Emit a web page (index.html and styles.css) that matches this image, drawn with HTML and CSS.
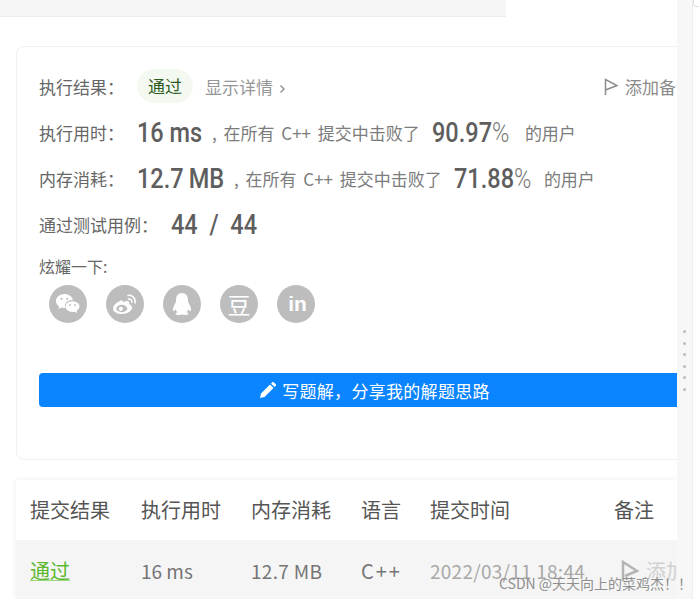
FILE: index.html
```html
<!DOCTYPE html>
<html lang="zh-CN">
<head>
    <meta charset="UTF-8">
    <title>提交记录</title>
    <link rel="stylesheet" href="styles.css">
</head>
<body>

    <div class="page">
        <div class="main">
            <div class="top-bar"></div>

            <!-- Result card -->
            <div class="card">
                <div class="row row-first">
                    <span class="label">执行结果：</span>
                    <span class="badge">通过</span>
                    <span class="details">显示详情
                        <svg class="chevron" width="7" height="10" viewBox="0 0 7 10"><path d="M1.500 1.500 5 5 1.500 8.500" fill="none" stroke="#8a8a8a" stroke-width="1.300"/></svg>
                    </span>
                    <span class="add-note">
                        <svg width="14" height="18" viewBox="0 0 14 18"><path d="M1.500 17V1.500L13 7.500 1.500 12" fill="none" stroke="#8c8c8c" stroke-width="1.500"/></svg>
                        添加备注
                    </span>
                </div>
                <div class="row">
                    <span class="label">执行用时：</span>
                    <span class="big time-val">16 ms</span>
                    <span class="text gap-comma">, 在所有 C++ 提交中击败了</span>
                    <span class="big time-pct">90.97<i>%</i></span>
                    <span class="text gap-users">的用户</span>
                </div>
                <div class="row">
                    <span class="label">内存消耗：</span>
                    <span class="big mem-val">12.7 MB</span>
                    <span class="text gap-comma">, 在所有 C++ 提交中击败了</span>
                    <span class="big mem-pct">71.88<i>%</i></span>
                    <span class="text gap-users">的用户</span>
                </div>
                <div class="row">
                    <span class="label label-wide">通过测试用例：</span>
                    <span class="big">44 &nbsp;/&nbsp; 44</span>
                </div>

                <div class="share-title">炫耀一下:</div>
                <div class="share-list">
                    <span class="share">
                        <svg width="26" height="22" viewBox="0 0 26 22" fill="#fff">
                            <path d="M9.500 1C4.800 1 1 4.100 1 8c0 2.200 1.200 4.100 3.100 5.400L3.300 16l3-1.500c1 .3 2 .5 3.200.5h.7a6 6 0 0 1-.3-1.900C9.900 9.500 13.300 7 17.400 7h.6C17.200 3.600 13.700 1 9.500 1z"/>
                            <path d="M17.500 8.200c-3.900 0-7 2.400-7 5.400s3.100 5.400 7 5.400c.8 0 1.600-.1 2.300-.3l2.500 1.300-.7-2.200c1.800-1.100 2.900-2.600 2.900-4.200 0-3-3.100-5.400-7-5.400z"/>
                            <circle cx="6.500" cy="5.800" r="1.100" fill="#bdbdbd"/><circle cx="12.300" cy="5.800" r="1.100" fill="#bdbdbd"/>
                            <circle cx="15" cy="12" r=".9" fill="#bdbdbd"/><circle cx="20" cy="12" r=".9" fill="#bdbdbd"/>
                        </svg>
                    </span>
                    <span class="share">
                        <svg width="26" height="22" viewBox="0 0 26 22" fill="none">
                            <path d="M10.500 7C6 8.300 1 12 1 15.500 1 19 5.500 21 10 21c5.500 0 10-3 10-6.500 0-2.200-2-3-3-3.300.8-2 .3-3.700-3.300-3-1.500.3-2.600 1-3.200.8z" fill="#fff"/>
                            <ellipse cx="9.800" cy="15.500" rx="5.500" ry="3.700" fill="#bdbdbd"/>
                            <circle cx="8.800" cy="15.800" r="2.100" fill="#fff"/>
                            <path d="M16 2.500c4-.8 8 2.700 7 7.500M16.500 6c2-.4 3.700 1.300 3.300 3.300" stroke="#fff" stroke-width="1.500" stroke-linecap="round"/>
                        </svg>
                    </span>
                    <span class="share">
                        <svg width="20" height="24" viewBox="0 0 22 26" fill="#fff">
                            <path d="M11 1C6.500 1 4.500 4.500 4.500 8.500c0 1-.1 1.900-.5 2.800-1.300 2.300-3 5.200-3 7.700 0 1.200.5 1.700 1 1.700.7 0 1.400-.8 2-1.900.3 1.300 1 2.400 2 3.200-1 .4-2 1-2 1.600C4 24.800 6 25 8 25c1.300 0 2.500-.3 3-.8.500.5 1.700.8 3 .8 2 0 4-.2 4-1.400 0-.6-1-1.200-2-1.600 1-.8 1.700-1.900 2-3.200.6 1.100 1.300 1.900 2 1.900.5 0 1-.5 1-1.700 0-2.500-1.700-5.400-3-7.700-.4-.9-.5-1.800-.5-2.800C17.500 4.500 15.500 1 11 1z"/>
                        </svg>
                    </span>
                    <span class="share share-text share-dou">豆</span>
                    <span class="share share-text share-in">in</span>
                </div>

                <div class="solution-btn">
                    <svg width="16" height="16" viewBox="0 0 16 16" fill="#fff"><path d="M0 16l1-4.500L10 2.500l3.500 3.500-9 9zM11 1.500 12.300.2a1 1 0 0 1 1.400 0l2.100 2.100a1 1 0 0 1 0 1.400L14.500 5z"/></svg>
                    写题解，分享我的解题思路
                </div>
            </div>

            <!-- Submissions table -->
            <div class="table">
                <div class="tr th">
                    <span class="c1">提交结果</span>
                    <span class="c2">执行用时</span>
                    <span class="c3">内存消耗</span>
                    <span class="c4">语言</span>
                    <span class="c5">提交时间</span>
                    <span class="c6">备注</span>
                </div>
                <div class="tr td">
                    <span class="c1 passed">通过</span>
                    <span class="c2">16 ms</span>
                    <span class="c3 mem-cell">12.7 MB</span>
                    <span class="c4 lang">C++</span>
                    <span class="c5 time">2022/03/11 18:44</span>
                    <span class="c6 note">
                        <svg width="18" height="22" viewBox="0 0 18 22"><path d="M2 21V2l14 9-12 5" fill="none" stroke="#b4b4b4" stroke-width="2.500"/></svg>
                        添加备注
                    </span>
                </div>
            </div>
        </div>

        <div class="gutter">
            <span class="dot"></span><span class="dot"></span><span class="dot"></span>
            <span class="dot"></span><span class="dot"></span><span class="dot"></span>
        </div>
        <div class="side">
            <div class="side-tab"></div>
        </div>
    </div>

    <div class="watermark">CSDN @天天向上的菜鸡杰！！</div>

</body>
</html>
```

FILE: styles.css
```css
* {
    box-sizing: border-box;
}
html, body {
    height: 100%;
}
body {
    margin: 0;
    background: #fff;
    overflow: hidden;
    font-family: "Noto Sans CJK SC", "Noto Sans", sans-serif;
    font-size: 17px;
    color: #595959;
}
.page {
    display: flex;
    height: 599px;
}
.main {
    width: 677px;
    flex: none;
    overflow: hidden;
}
.top-bar {
    width: 506px;
    height: 17px;
    background: #f6f6f6;
    border-bottom: 1px solid #ededed;
}
.card {
    width: 720px;
    height: 414px;
    margin: 29px 0 0 16px;
    padding: 16px 22px;
    border: 1px solid #f0f0f0;
    border-radius: 8px;
}
.row {
    display: flex;
    align-items: center;
    height: 46px;
    white-space: nowrap;
}
.row-first {
    position: relative;
}
.label {
    width: 98px;
    flex: none;
    color: #666;
}
.label-wide {
    width: 132px;
}
.badge {
    padding: 0 11px;
    height: 34px;
    line-height: 33px;
    border-radius: 17px;
    background: #f3f8f0;
    color: #2c5a1e;
}
.details {
    margin-left: 12px;
    color: #969696;
}
.chevron {
    margin-left: 2px;
}
.add-note {
    position: absolute;
    left: 565px;
    top: 11px;
    display: flex;
    align-items: center;
    gap: 7px;
    color: #8a8a8a;
}
/* narrow DIN look: no condensed font here, so squeeze Roboto */
.big {
    display: inline-block;
    flex: none;
    font-family: Roboto, sans-serif;
    font-weight: 500;
    font-size: 28px;
    color: #5e5e5e;
    transform: scaleX(0.84);
    transform-origin: left center;
}
.big i {
    font-style: normal;
    font-weight: 300;
    color: #7a7a7a;
}
.time-val { width: 65px; }
.mem-val { width: 87px; word-spacing: -1px; }
.time-pct { width: 78px; }
.mem-pct { width: 75px; }
.text {
    color: #7c7c7c;
    word-spacing: 3px;
}
.gap-comma {
    margin: 0 12px 0 10px;
}
.gap-users {
    margin-left: 15px;
}
.share-title {
    margin-top: 6px;
    line-height: 26px;
    font-size: 16px;
    color: #666;
}
.share-list {
    display: flex;
    gap: 19px;
    margin: 6px 0 0 10px;
}
.share {
    display: flex;
    align-items: center;
    justify-content: center;
    width: 38px;
    height: 38px;
    border-radius: 50%;
    background: #bdbdbd;
    color: #fff;
}
.share-dou {
    font-size: 23px;
}
.share-in {
    font-family: "Liberation Sans", sans-serif;
    font-weight: 700;
    font-size: 21px;
    padding-left: 3px;
}
.solution-btn {
    display: flex;
    align-items: center;
    justify-content: center;
    gap: 6px;
    width: 666px;
    height: 34px;
    margin-top: 50px;
    padding-left: 6px;
    border-radius: 4px;
    background: #0a84ff;
    color: #fff;
    letter-spacing: 0.3px;
}
.table {
    margin: 20px 0 0 16px;
    box-shadow: 0 0 6px rgba(0, 0, 0, 0.08);
}
.tr {
    position: relative;
    white-space: nowrap;
}
.th {
    height: 60px;
    line-height: 60px;
    font-size: 20px;
    color: #555;
    background: #fff;
}
.td {
    height: 60px;
    line-height: 61px;
    background: #f5f5f5;
    font-size: 19px;
    color: #757575;
    overflow: hidden;
}
.tr span {
    position: absolute;
    top: 0;
}
.c1 { left: 14px; }
.c2 { left: 125px; }
.c3 { left: 235px; }
.c4 { left: 345px; }
.c5 { left: 414px; }
.c6 { left: 598px; }
.passed {
    font-size: 20px;
    color: #5cb82e;
    text-decoration: underline;
    text-underline-offset: 1px;
    text-decoration-thickness: 1px;
    text-decoration-color: #9ad67c;
}
.mem-cell {
    letter-spacing: 0.3px;
}
.lang {
    letter-spacing: 2px;
    font-size: 20px;
}
.time {
    color: #a8a8a8;
    letter-spacing: 0.25px;
}
.note {
    left: 605px;
    font-size: 20px;
    color: #d0d0d0;
    display: flex;
    align-items: center;
    gap: 7px;
}
.gutter {
    width: 15px;
    flex: none;
    display: flex;
    flex-direction: column;
    align-items: center;
    justify-content: flex-start;
    gap: 8.5px;
    padding-top: 330px;
    background: #f7f7f7;
}
.dot {
    width: 3px;
    height: 3px;
    border-radius: 50%;
    background: #bbb;
}
.side {
    flex: 1;
    padding-top: 16px;
    border-left: 1px solid #eee;
    position: relative;
}
.side-tab {
    position: absolute;
    top: -4px;
    left: 0;
    width: 10px;
    height: 11px;
    border: 1px solid #ddd;
    border-radius: 3px;
}
.watermark {
    position: absolute;
    left: 499px;
    top: 573px;
    font-family: "Noto Sans CJK SC", sans-serif;
    font-size: 14px;
    color: #8f8f8f;
    white-space: nowrap;
}
```
